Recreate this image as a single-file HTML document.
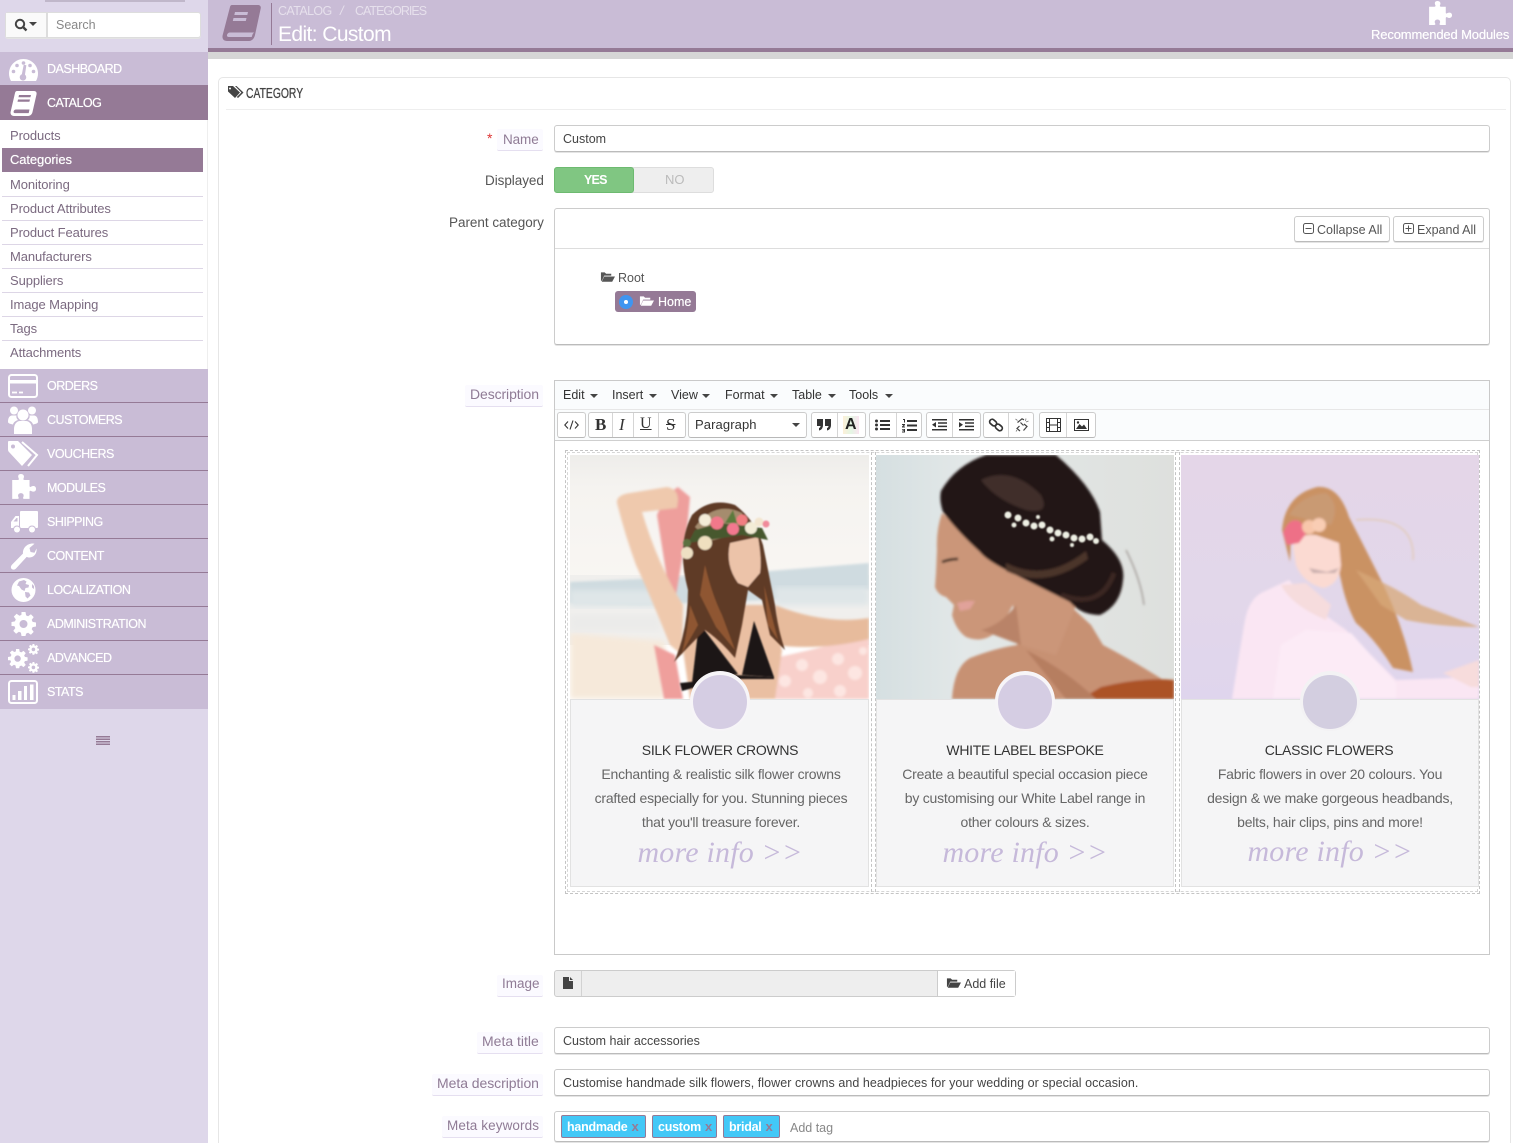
<!DOCTYPE html>
<html><head><meta charset="utf-8"><title>Edit: Custom</title>
<style>
html,body{margin:0;padding:0;background:#fff}
#p{position:relative;width:1513px;height:1143px;overflow:hidden;background:#fff;font-family:"Liberation Sans",sans-serif;font-size:12.5px;color:#555}
.a,.t{position:absolute}
.t{white-space:nowrap;line-height:20px}
svg{position:absolute;overflow:visible}
.m{left:0;width:208px;background:#c9bcd6;height:33px;border-bottom:1px solid #957a96}
.mt{left:47px;color:#fff;font-size:12.5px;letter-spacing:-.5px;text-shadow:0 0 .5px #fff}
.s{left:10px;color:#7b6a80;font-size:13px;letter-spacing:-.1px}
.l{left:2px;width:201px;height:1px;background:#ddd6e6}
.inp{background:#fff;border:1px solid #ccc;border-bottom-color:#bbb;border-radius:3px;box-sizing:border-box;box-shadow:0 1px 0 #e4e4e4}
.lab{color:#8f7b95;font-size:13.5px;text-align:right}
.lb{background:#fbfaff;height:21px;border-bottom:1px solid #e5dff0;border-radius:2px}
.tb{background:#fff;border:1px solid #ccc;border-bottom-color:#b8b8b8;border-radius:3px;box-sizing:border-box;height:26px;top:412px}
.dv{top:413px;width:1px;height:24px;background:#d5d5d5}
.mi{top:385px;color:#333;font-size:12.5px}
.ar{width:0;height:0;border-left:4px solid transparent;border-right:4px solid transparent;border-top:4px solid #444;top:394px}
.ct{color:#333;font-size:14px;width:300px;text-align:center;letter-spacing:-.3px}
.cp{color:#666;font-size:14px;width:300px;text-align:center;letter-spacing:-.22px}
.mo{color:#c6b9da;font-family:"Liberation Serif",serif;font-style:italic;font-size:30px;letter-spacing:.2px;width:300px;text-align:center;line-height:40px}
.tg{background:#43c8f7;border:1px solid #957a96;border-radius:2px;box-sizing:border-box;height:23px;top:1115px;color:#fff;font-size:12.5px;font-weight:bold;line-height:21px;padding-left:5px;letter-spacing:-.25px;white-space:nowrap}
.tg b{color:#957a96;margin-left:4px;font-size:13px}
</style></head><body><div id="p">
<svg width="0" height="0" style="position:absolute"><defs>
<filter id="b1" x="-10%" y="-10%" width="120%" height="120%"><feGaussianBlur stdDeviation="1.3"/></filter>
<filter id="b0" x="-10%" y="-10%" width="120%" height="120%"><feGaussianBlur stdDeviation=".7"/></filter>
<filter id="b2" x="-10%" y="-10%" width="120%" height="120%"><feGaussianBlur stdDeviation="3"/></filter>
<path id="fo" d="M1 1h4l1.500 1.500H12v2H4.500L2 10H1zM4.500 5.500H16l-3 5.500H1.800z"/>
<path id="pz" d="M11 0c2.500 0 3.500 2 2.500 4-.5 1 0 1.500 1 1.500H19v5.500c0 1 .7 1.200 1.500.7 2-1.200 4.500-.5 4.500 2s-2.500 3.200-4.500 2c-.8-.5-1.500-.2-1.500.8V23h-5c-1 0-1.300-.7-.8-1.500 1-2 0-3.800-2.200-3.800s-3.200 1.800-2.200 3.800c.5.800.2 1.500-.8 1.500H3V5.500h5c1 0 1.500-.5 1-1.500C8 2 8.500 0 11 0z"/>
</defs></svg>

<!-- SIDEBAR -->
<div class="a" style="left:0;top:0;width:208px;height:1143px;background:#ded7ea"></div>
<div class="a" style="left:45px;top:0;width:140px;height:2px;background:#8a7a8e;opacity:.35"></div>
<div class="a inp" style="left:5px;top:12px;width:196px;height:26px;border-color:#ddd"></div>
<div class="a" style="left:6px;top:13px;width:40px;height:24px;background:#fafafa;border-right:2px solid #ddd"></div>
<svg style="left:14px;top:18px" width="14" height="14" viewBox="0 0 14 14"><circle cx="6" cy="6" r="4.200" fill="none" stroke="#444" stroke-width="2"/><path d="M9 9l3.500 3.500" stroke="#444" stroke-width="2.400"/></svg>
<div class="a ar" style="left:29px;top:22px"></div>
<div class="t" style="left:56px;top:15px;color:#888;font-size:12.5px">Search</div>

<div class="a" style="left:0;top:52px;width:208px;height:33px;background:#c9bcd6"></div>
<svg style="left:9px;top:58px" width="29" height="23" viewBox="0 0 29 23"><path fill="#fff" d="M14.500 1C6.500 1 0 7.500 0 15.500c0 2.700.7 5.300 2 7.500h25c1.300-2.200 2-4.800 2-7.500C29 7.500 22.500 1 14.500 1z"/><g fill="#c9bcd6"><circle cx="14.500" cy="5" r="1.800"/><circle cx="8" cy="7.500" r="1.800"/><circle cx="21" cy="7.500" r="1.800"/><circle cx="4.500" cy="13.500" r="1.800"/><circle cx="24.500" cy="13.500" r="1.800"/><path d="M16.500 7l2.500 1-3 9a3.300 3.300 0 1 1-3-1z" transform="rotate(-10 14 17)"/></g></svg>
<div class="t mt" style="top:59px">DASHBOARD</div>

<div class="a" style="left:0;top:85px;width:208px;height:35px;background:#957a96"></div>
<svg style="left:10px;top:91px" width="28" height="25" viewBox="0 0 28 25"><path fill="#fff" d="M7 0h17c2 0 3 1.500 2.500 3.500L22.500 21c-.4 2-2 4-4.500 4H4c-2.500 0-4-2-3.300-4.500L5 2C5.300.8 6 0 7 0z"/><path fill="#957a96" d="M9 4h12l-.6 2.200H8.500zM8 8.500h12l-.6 2.200H7.500zM3.600 20.500c.3-1.200 1.300-2 2.400-2h13.500l-.8 3.600H5c-1 0-1.700-.7-1.400-1.600z"/></svg>
<div class="t mt" style="top:93px">CATALOG</div>

<div class="a" style="left:0;top:120px;width:208px;height:249px;background:#fff"></div>
<div class="a" style="left:207px;top:120px;width:1px;height:249px;background:#eee"></div>
<div class="t s" style="top:126px">Products</div>
<div class="a" style="left:2px;top:148px;width:201px;height:24px;background:#957a96"></div>
<div class="t s" style="top:150px;color:#fff;text-shadow:0 0 .5px #fff">Categories</div>
<div class="t s" style="top:175px">Monitoring</div><div class="a l" style="top:196px"></div>
<div class="t s" style="top:199px">Product Attributes</div><div class="a l" style="top:220px"></div>
<div class="t s" style="top:223px">Product Features</div><div class="a l" style="top:244px"></div>
<div class="t s" style="top:247px">Manufacturers</div><div class="a l" style="top:268px"></div>
<div class="t s" style="top:271px">Suppliers</div><div class="a l" style="top:292px"></div>
<div class="t s" style="top:295px">Image Mapping</div><div class="a l" style="top:316px"></div>
<div class="t s" style="top:319px">Tags</div><div class="a l" style="top:340px"></div>
<div class="t s" style="top:343px">Attachments</div>

<div class="a m" style="top:369px"></div><div class="a m" style="top:403px"></div><div class="a m" style="top:437px"></div><div class="a m" style="top:471px"></div><div class="a m" style="top:505px"></div><div class="a m" style="top:539px"></div><div class="a m" style="top:573px"></div><div class="a m" style="top:607px"></div><div class="a m" style="top:641px"></div>
<div class="a" style="left:0;top:675px;width:208px;height:34px;background:#c9bcd6"></div>
<div class="t mt" style="top:376px">ORDERS</div>
<div class="t mt" style="top:410px">CUSTOMERS</div>
<div class="t mt" style="top:444px">VOUCHERS</div>
<div class="t mt" style="top:478px">MODULES</div>
<div class="t mt" style="top:512px">SHIPPING</div>
<div class="t mt" style="top:546px">CONTENT</div>
<div class="t mt" style="top:580px">LOCALIZATION</div>
<div class="t mt" style="top:614px">ADMINISTRATION</div>
<div class="t mt" style="top:648px">ADVANCED</div>
<div class="t mt" style="top:682px">STATS</div>
<svg style="left:8px;top:374px" width="30" height="24" viewBox="0 0 30 24"><rect x="1" y="1" width="28" height="22" rx="2.500" fill="none" stroke="#fff" stroke-width="2"/><rect x="1" y="6" width="28" height="3.500" fill="#fff"/><path d="M4 18.500h5M11 18.500h4" stroke="#fff" stroke-width="1.800"/></svg>
<svg style="left:8px;top:406px" width="30" height="28" viewBox="0 0 30 28" fill="#fff"><circle cx="15" cy="9" r="5.500"/><path d="M6 28v-5c0-5 3-8 6-8h6c3 0 6 3 6 8v5c0 0-4 0-9 0s-9 0-9 0z"/><circle cx="6" cy="4.500" r="4"/><circle cx="24" cy="4.500" r="4"/><path d="M0 16c0-4 1.500-6.500 4-6.500h4.500C8 11 8.500 12.500 10 14c-3 1-4.500 2.500-5 4.500C2 18 0 17 0 16zM30 16c0-4-1.500-6.500-4-6.500h-4.500C22 11 21.500 12.500 20 14c3 1 4.500 2.500 5 4.500 3-.5 5-1.500 5-2.500z"/></svg>
<svg style="left:8px;top:441px" width="30" height="26" viewBox="0 0 30 26"><path fill="#fff" d="M1 0h9l14 14-10 11L1 11c-1-1-1-2-1-3V1c0-.6.400-1 1-1zm4 3.500a2 2 0 1 0 0 4 2 2 0 0 0 0-4z" fill-rule="evenodd"/><path d="M14 1l15 13-9 11" fill="none" stroke="#fff" stroke-width="2"/></svg>
<svg style="left:8px;top:474px" width="29" height="26" viewBox="0 0 25 24" fill="#fff"><use href="#pz"/></svg>
<svg style="left:11px;top:511px" width="27" height="23" viewBox="0 0 27 23" fill="#fff"><rect x="9" y="0" width="18" height="17" rx="1"/><path d="M8 5H4.500L0 11v6h8zM2.500 10.500l3-3.500H6.500v3.500z" fill-rule="evenodd"/><circle cx="6" cy="18.500" r="4" fill="#c9bcd6"/><circle cx="6" cy="18.500" r="3"/><circle cx="21" cy="18.500" r="4" fill="#c9bcd6"/><circle cx="21" cy="18.500" r="3"/></svg>
<svg style="left:11px;top:543px" width="26" height="27" viewBox="0 0 26 27"><path fill="#fff" d="M25.500 5.500c.8 4.500-2.500 9-7 9-1 0-2-.2-2.800-.6L5 25.500c-1.500 1.500-3.500 1.500-4.500.3-1-1.200-.7-2.900.7-4.300L12 10.500c-.5-5 3.500-10 10-10 .5 0 1 .1 1.500.3l-5 4.200 1 4 4 .8z"/></svg>
<svg style="left:11px;top:578px" width="25" height="24" viewBox="0 0 25 24"><circle cx="12.500" cy="12" r="12" fill="#fff"/><path fill="#c9bcd6" d="M8 3.500l5-1.500 2.500 1.500-1 2.500 3.500 1-.5 2.500-3 .5-1 3-3-1.500-2.500-3.500-2-.5zM14 14l4 .5 1.500 3-3 3-2-2zM21 6l2 2v3l-2-1.500z"/></svg>
<svg style="left:11px;top:612px" width="25" height="24" viewBox="0 0 24 24"><path fill="#fff" fill-rule="evenodd" d="M10 0h4l.6 3.400 2 .8L19.400 2.300l2.800 2.800-2 2.800.9 2 3.400.6v4l-3.400.6-.9 2 2 2.800-2.800 2.800-2.800-2-2 .9L14 24h-4l-.6-3.400-2-.9-2.800 2-2.800-2.800 2-2.800-.9-2L0 14v-4l3.400-.6.900-2-2-2.800 2.800-2.800 2.800 2 2-.9zM12 8a4 4 0 1 0 0 8 4 4 0 0 0 0-8z"/></svg>
<svg style="left:8px;top:644px" width="31" height="29" viewBox="0 0 31 29"><g fill="#fff" fill-rule="evenodd"><path transform="translate(0 5) scale(.8)" d="M10 0h4l.6 3.400 2 .8L19.400 2.300l2.800 2.800-2 2.800.9 2 3.400.6v4l-3.400.6-.9 2 2 2.800-2.800 2.800-2.800-2-2 .9L14 24h-4l-.6-3.400-2-.9-2.800 2-2.800-2.800 2-2.800-.9-2L0 14v-4l3.400-.6.900-2-2-2.800 2.800-2.800 2.800 2 2-.9zM12 8a4 4 0 1 0 0 8 4 4 0 0 0 0-8z"/><path transform="translate(20 0) scale(.45)" d="M10 0h4l.6 3.400 2 .8L19.400 2.300l2.800 2.800-2 2.800.9 2 3.400.6v4l-3.400.6-.9 2 2 2.800-2.800 2.800-2.800-2-2 .9L14 24h-4l-.6-3.400-2-.9-2.800 2-2.800-2.800 2-2.800-.9-2L0 14v-4l3.400-.6.900-2-2-2.800 2.800-2.800 2.800 2 2-.9zM12 8a4 4 0 1 0 0 8 4 4 0 0 0 0-8z"/><path transform="translate(20 18) scale(.45)" d="M10 0h4l.6 3.400 2 .8L19.400 2.300l2.800 2.800-2 2.800.9 2 3.400.6v4l-3.400.6-.9 2 2 2.800-2.800 2.800-2.800-2-2 .9L14 24h-4l-.6-3.400-2-.9-2.800 2-2.800-2.800 2-2.800-.9-2L0 14v-4l3.400-.6.900-2-2-2.800 2.800-2.800 2.800 2 2-.9zM12 8a4 4 0 1 0 0 8 4 4 0 0 0 0-8z"/></g></svg>
<svg style="left:8px;top:680px" width="30" height="24" viewBox="0 0 30 24"><rect x="1" y="1" width="28" height="22" rx="2.500" fill="none" stroke="#fff" stroke-width="2"/><path fill="#fff" d="M4.500 15h3v5h-3zM10 11h3.500v9H10zM16 6h3v14h-3zM22 4.500h3.500V20H22z"/></svg>
<div class="a" style="left:96px;top:736px;width:14px;height:10px;background:repeating-linear-gradient(#957a96 0 1.500px,#ded7ea 1.500px 2.500px)"></div>

<!-- HEADER -->
<div class="a" style="left:208px;top:0;width:1305px;height:48px;background:#c9bcd6"></div>
<div class="a" style="left:208px;top:48px;width:1305px;height:4px;background:#957a96"></div>
<div class="a" style="left:208px;top:52px;width:1305px;height:7px;background:#d6d6d6"></div>
<svg style="left:222px;top:4px" width="41" height="38" viewBox="0 0 41 38"><path fill="#957a96" d="M10 1h26c2 0 3.200 1.500 2.700 3.500L33 31c-.5 2.500-2.500 6-6 6H5c-3.500 0-5.200-2.500-4.300-6L8 3c.3-1.200 1-2 2-2z"/><path fill="#c9bcd6" d="M13 8h13l-.7 3H12.300zM11.500 14h13l-.7 3H10.800zM5 31c.3-1.500 1.500-2.500 3-2.500h24l-1.300 1.500-1 3H7c-1.500 0-2.300-.7-2-2z"/></svg>
<div class="a" style="left:271px;top:3px;width:1px;height:42px;background:#957a96"></div>
<div class="t" style="left:278px;top:1px;color:#e6e0ec;font-size:12.5px;letter-spacing:-.6px">CATALOG</div>
<div class="t" style="left:340px;top:1px;color:#e6e0ec;font-size:13px;font-style:italic">/</div>
<div class="t" style="left:355px;top:1px;color:#e6e0ec;font-size:12.5px;letter-spacing:-1px">CATEGORIES</div>
<div class="t" style="left:278px;top:25px;color:#fff;font-size:21px;letter-spacing:-.6px">Edit: Custom</div>
<svg style="left:1425px;top:1px" width="28" height="25" viewBox="0 0 25 24" fill="#fff"><use href="#pz"/></svg>
<div class="t" style="left:1371px;top:25px;color:#fff;font-size:13px;letter-spacing:-.14px;text-shadow:0 0 .5px #fff">Recommended Modules</div>

<!-- PANEL -->
<div class="a" style="left:218px;top:77px;width:1293px;height:1090px;border:1px solid #e6e6e6;border-radius:5px;box-sizing:border-box"></div>
<div class="a" style="left:226px;top:109px;width:1280px;height:1px;background:#eee"></div>
<svg style="left:228px;top:86px" width="16" height="13" viewBox="0 0 16 13" fill="#444"><path d="M0 0h5l7 6.500L7 12 0 5.500zM2 1.500a1 1 0 1 0 0 2 1 1 0 0 0 0-2z" fill-rule="evenodd"/><path d="M7 0h1.500L15.500 6.500 10 12l-1.200-1 4.600-4.500z"/></svg>
<div class="t" style="left:246px;top:84px;color:#444;font-size:15px;transform:scaleX(.69);transform-origin:0 50%;text-shadow:0 0 .6px #444">CATEGORY</div>

<!-- name -->
<div class="a lb" style="left:497px;top:129px;width:46px"></div>
<div class="t" style="left:487px;top:128px;color:#d33;font-size:14px">*</div>
<div class="t lab" style="left:503px;top:130px;letter-spacing:-.1px">Name</div>
<div class="a inp" style="left:554px;top:125px;width:936px;height:27px"></div>
<div class="t" style="left:563px;top:129px;color:#444">Custom</div>
<!-- displayed -->
<div class="t" style="left:485px;top:171px;color:#555;font-size:13.5px;letter-spacing:-.05px">Displayed</div>
<div class="a" style="left:554px;top:167px;width:160px;height:26px;background:#eee;border:1px solid #ddd;border-radius:3px;box-sizing:border-box"></div>
<div class="a" style="left:554px;top:167px;width:80px;height:26px;background:#80c682;border:1px solid #6dba70;border-radius:3px;box-sizing:border-box"></div>
<div class="t" style="left:584px;top:170px;color:#fff;font-size:12.5px;font-weight:bold;letter-spacing:-.8px">YES</div>
<div class="t" style="left:665px;top:170px;color:#bbb;font-size:13px">NO</div>
<!-- parent -->
<div class="t" style="left:449px;top:213px;color:#555;font-size:13.500px;letter-spacing:-.03px">Parent category</div>
<div class="a inp" style="left:554px;top:208px;width:936px;height:137px"></div>
<div class="a" style="left:555px;top:248px;width:934px;height:1px;background:#ddd"></div>
<div class="a inp" style="left:1294px;top:216px;width:96px;height:26px"></div>
<div class="a inp" style="left:1393px;top:216px;width:91px;height:26px"></div>
<svg style="left:1303px;top:223px" width="11" height="11"><rect x=".5" y=".5" width="10" height="10" rx="2" fill="none" stroke="#555"/><path d="M2.500 5.500h6" stroke="#555"/></svg>
<svg style="left:1403px;top:223px" width="11" height="11"><rect x=".5" y=".5" width="10" height="10" rx="2" fill="none" stroke="#555"/><path d="M2.500 5.500h6M5.500 2.500v6" stroke="#555"/></svg>
<div class="t" style="left:1317px;top:220px;color:#555">Collapse All</div>
<div class="t" style="left:1417px;top:220px;color:#555">Expand All</div>
<svg style="left:600px;top:271px" width="15" height="12" viewBox="0 0 16 12" fill="#555"><use href="#fo"/></svg>
<div class="t" style="left:618px;top:268px;color:#555">Root</div>
<div class="a" style="left:615px;top:291px;width:81px;height:21px;background:#957a96;border-radius:3px"></div>
<svg style="left:619px;top:295px" width="14" height="14"><circle cx="7" cy="7" r="7" fill="#3f95f0"/><circle cx="7" cy="7" r="2" fill="#fff"/></svg>
<svg style="left:639px;top:295px" width="15" height="12" viewBox="0 0 16 12" fill="#fff"><use href="#fo"/></svg>
<div class="t" style="left:658px;top:292px;color:#fff;text-shadow:0 0 .5px #fff">Home</div>

<!-- description -->
<div class="a lb" style="left:465px;top:385px;width:78px"></div>
<div class="t lab" style="left:470px;top:384px;font-size:14px;letter-spacing:-.1px">Description</div>
<div class="a" style="left:554px;top:380px;width:936px;height:575px;border:1px solid #c9c9c9;box-sizing:border-box;background:#fff"></div>
<div class="a" style="left:555px;top:381px;width:934px;height:28px;background:#fafcfd;border-bottom:1px solid #e7e7e7"></div>
<div class="a" style="left:555px;top:410px;width:934px;height:30px;background:#fafcfd;border-bottom:1px solid #cfcfcf"></div>
<div class="t mi" style="left:563px">Edit</div><div class="a ar" style="left:590px"></div>
<div class="t mi" style="left:612px">Insert</div><div class="a ar" style="left:649px"></div>
<div class="t mi" style="left:671px">View</div><div class="a ar" style="left:702px"></div>
<div class="t mi" style="left:725px">Format</div><div class="a ar" style="left:770px"></div>
<div class="t mi" style="left:792px">Table</div><div class="a ar" style="left:828px"></div>
<div class="t mi" style="left:849px">Tools</div><div class="a ar" style="left:885px"></div>

<div class="a tb" style="left:557px;width:29px"></div>
<div class="a tb" style="left:588px;width:98px"></div><div class="a dv" style="left:612px"></div><div class="a dv" style="left:633px"></div><div class="a dv" style="left:658px"></div>
<div class="a tb" style="left:688px;width:119px"></div>
<div class="a tb" style="left:811px;width:55px"></div><div class="a dv" style="left:837px"></div>
<div class="a tb" style="left:869px;width:53px"></div><div class="a dv" style="left:896px"></div>
<div class="a tb" style="left:926px;width:55px"></div><div class="a dv" style="left:952px"></div>
<div class="a tb" style="left:983px;width:51px"></div><div class="a dv" style="left:1008px"></div>
<div class="a tb" style="left:1039px;width:57px"></div><div class="a dv" style="left:1066px"></div>
<svg style="left:564px;top:420px" width="15" height="10"><path d="M4 1.500L.8 5 4 8.500M11 1.500L14.200 5 11 8.500M9 .5L6 9.500" fill="none" stroke="#333" stroke-width="1.100"/></svg>
<div class="t" style="left:595px;top:415px;color:#333;font:bold 17px/20px 'Liberation Serif',serif">B</div>
<div class="t" style="left:619px;top:415px;color:#333;font:italic 17px/20px 'Liberation Serif',serif">I</div>
<div class="t" style="left:640px;top:414px;color:#333;font:16px/20px 'Liberation Serif',serif;text-decoration:underline">U</div>
<div class="t" style="left:666px;top:415px;color:#333;font:17px/20px 'Liberation Serif',serif;text-decoration:line-through">S</div>
<div class="t" style="left:695px;top:415px;color:#333;font-size:13px;letter-spacing:.1px">Paragraph</div>
<div class="a ar" style="left:792px;top:423px"></div>
<svg style="left:817px;top:419px" width="14" height="12" fill="#333"><path d="M0 0h6v6c0 3-1.500 5-4 5.500V9c1-.2 1.500-1 1.500-2H0zM8 0h6v6c0 3-1.500 5-4 5.500V9c1-.2 1.500-1 1.500-2H8z"/></svg>
<div class="a" style="left:843px;top:416px;width:16px;height:18px;background:linear-gradient(90deg,#fdf0d8,#e4f6e4 50%,#fae4f0)"></div>
<div class="t" style="left:845px;top:415px;color:#222;font-size:16px;font-weight:bold;">A</div>
<svg style="left:875px;top:419px" width="15" height="12" fill="#333"><path d="M5 1h10v2H5zM5 5h10v2H5zM5 9h10v2H5z"/><circle cx="1.500" cy="2" r="1.500"/><circle cx="1.500" cy="6" r="1.500"/><circle cx="1.500" cy="10" r="1.500"/></svg>
<svg style="left:902px;top:419px" width="15" height="13" fill="#333"><path d="M5 1h10v2H5zM5 5.500h10v2H5zM5 10h10v2H5zM1 0h2v3.500H2V1H1zM0 5h3v1L1.500 7.500H3V8.500H0v-1L1.500 6H0zM0 10h3v3.500H0v-1h2V12H.5v-.8H2v-.4H0z"/></svg>
<svg style="left:932px;top:419px" width="15" height="12" fill="#333"><path d="M0 0h15v1.500H0zM6 3.300h9v1.500H6zM6 6.600h9v1.500H6zM0 10h15v1.500H0zM4 3v5.500L0 5.700z"/></svg>
<svg style="left:959px;top:419px" width="15" height="12" fill="#333"><path d="M0 0h15v1.500H0zM6 3.300h9v1.500H6zM6 6.600h9v1.500H6zM0 10h15v1.500H0zM0 3v5.500l4-2.800z"/></svg>
<svg style="left:989px;top:418px" width="14" height="14"><g fill="none" stroke="#333" stroke-width="1.700" transform="rotate(40 7 7)"><rect x="-.5" y="4.500" width="7.500" height="5" rx="2.500"/><rect x="7" y="4.500" width="7.500" height="5" rx="2.500"/></g></svg>
<svg style="left:1015px;top:418px" width="14" height="14"><g fill="none" stroke="#444" stroke-width="1.200"><path d="M2.500 4.500L7 0.800l2 1M5 13l-3-2.500 2.500-2.500M9 6l3 2.500-3.500 4M5.500 4.500l3 3"/></g><path d="M.5 1l2 1.500M11 .5l-.5 2.500M13.500 3L11 4M1 13.500l1-1.500" stroke="#777" stroke-width=".8"/></svg>
<svg style="left:1046px;top:418px" width="15" height="14"><rect x=".5" y=".5" width="14" height="13" fill="none" stroke="#333"/><path d="M3.500 .5v13M11.500 .5v13M.5 4.500h3M.5 9.500h3M11.500 4.500h3M11.500 9.500h3M3.500 7h8" stroke="#333" fill="none"/></svg>
<svg style="left:1074px;top:419px" width="15" height="12"><rect x=".5" y=".5" width="14" height="11" fill="#fff" stroke="#333"/><path d="M2 10l3.500-5 2.500 2.500 2-2 3 4.500z" fill="#333"/><circle cx="4" cy="3.500" r="1.200" fill="#333"/></svg>

<!-- editor content: dashes -->
<div class="a" style="left:565px;top:450px;width:915px;height:444px;border:1px dashed #c4c4c4;box-sizing:border-box"></div>
<div class="a" style="left:567px;top:452px;width:911px;height:440px;border:1px dashed #d6d6d6;box-sizing:border-box"></div>
<div class="a" style="left:871px;top:452px;width:3px;height:440px;border-left:1px dashed #c4c4c4;border-right:1px dashed #c4c4c4"></div>
<div class="a" style="left:1175px;top:452px;width:3px;height:440px;border-left:1px dashed #c4c4c4;border-right:1px dashed #c4c4c4"></div>

<!-- card bodies -->
<div class="a" style="left:570px;top:699px;width:299px;height:188px;background:#f5f5f6;border:1px solid #e2e2e2;box-sizing:border-box"></div>
<div class="a" style="left:876px;top:699px;width:298px;height:188px;background:#f5f5f6;border:1px solid #e2e2e2;box-sizing:border-box"></div>
<div class="a" style="left:1181px;top:699px;width:298px;height:188px;background:#f5f5f6;border:1px solid #e2e2e2;box-sizing:border-box"></div>

<!-- PHOTO 1 -->
<svg style="left:570px;top:455px;overflow:hidden" width="299" height="244" viewBox="0 0 299 244">
<defs><linearGradient id="sk1" x1="0" y1="0" x2="0" y2="1"><stop offset="0" stop-color="#eeedea"/><stop offset=".25" stop-color="#f5f3f0"/><stop offset="1" stop-color="#f9f6f3"/></linearGradient></defs>
<rect width="299" height="130" fill="url(#sk1)"/>
<rect y="120" width="299" height="70" fill="#f0efed"/>
<path d="M0 127L70 124L200 116L299 108V135L200 145L70 150L0 148z" fill="#cfdbe0" filter="url(#b1)"/>
<path d="M0 135H95V152H0zM205 132H299V150H205z" fill="#dfe6e8" filter="url(#b2)"/>
<path d="M0 178L95 186V244H0z" fill="#f6e9da" filter="url(#b2)"/>
<path d="M0 160H90V176H0z" fill="#ebebea" filter="url(#b2)"/>
<g filter="url(#b1)">
<path d="M87 60L96 40L108 32L120 42L117 75L106 140L98 130z" fill="#ee9f9c"/>
<path d="M84 190L105 200L113 244H94z" fill="#ef9f9c"/>
<path d="M196 205L240 195L299 180V244H200z" fill="#f8d0cb"/>
<g fill="#fde6e2"><circle cx="215" cy="226" r="6"/><circle cx="232" cy="210" r="6"/><circle cx="250" cy="222" r="7"/><circle cx="268" cy="204" r="6"/><circle cx="285" cy="218" r="7"/><circle cx="270" cy="236" r="6"/><circle cx="293" cy="196" r="4"/><circle cx="238" cy="238" r="5"/></g>
<path d="M205 150Q255 170 299 163V184Q250 196 205 190z" fill="#e7bb9c"/>
<path d="M47 48Q46 40 60 38L97 32Q108 34 108 45L107 53L72 57Q88 110 113 150L112 200L100 190Q80 140 66 110Q55 80 47 48z" fill="#efc9ad"/>
<path d="M113 195L125 150L200 150L212 195L205 244H120z" fill="#eabfa2"/>
</g>
<g filter="url(#b0)">
<path d="M129 168L168 219L122 228zM172 220L184 166L204 222z" fill="#1a1513"/>
<path d="M110 228L130 226L165 220L204 222V224L165 224L130 231L112 236z" fill="#1a1513"/>
<path d="M122 60Q140 42 165 50Q185 65 193 90Q200 125 205 150Q208 175 215 195L200 180L192 145L178 135L172 170L165 203Q150 185 135 175Q120 190 104 207Q118 175 118 135Q106 90 122 60z" fill="#5f3a27"/>
<path d="M125 72Q145 45 172 58L178 76L140 86z" fill="#a58c6e"/>
<path d="M160 88L188 82Q192 105 190 118L178 132L168 128Q155 110 160 88z" fill="#ecc3a9"/>
<path d="M135 110Q142 140 152 160L165 195L146 172L130 140zM194 130Q200 155 208 185L198 170zM120 150Q118 175 112 198L128 170z" fill="#8f5632"/>
<path d="M118 88L145 84L172 80L198 85L192 73L150 68L125 75z" fill="#46592f"/>
<circle cx="135" cy="88" r="7" fill="#efdfbf"/><circle cx="117" cy="88" r="4" fill="#5b7040"/><circle cx="117" cy="98" r="6" fill="#eee0c3"/>
<circle cx="135" cy="65" r="6" fill="#f4ecd8"/><circle cx="147" cy="68" r="6.500" fill="#f1788a"/><circle cx="163" cy="74" r="6" fill="#f3788f"/><circle cx="172" cy="65" r="5.500" fill="#f17d80"/><circle cx="181" cy="73" r="6" fill="#f3ecd6"/><circle cx="189" cy="67" r="4.500" fill="#f3e6d0"/><circle cx="196" cy="69" r="3.500" fill="#f08a9a"/><path d="M155 68l8-13 4 13z" fill="#5c7a3c"/>
</g></svg>

<!-- PHOTO 2 -->
<svg style="left:876px;top:455px;overflow:hidden" width="298" height="244" viewBox="0 0 298 244">
<defs><linearGradient id="sk2" x1="0" y1="0" x2="1" y2="0"><stop offset="0" stop-color="#d5dfe1"/><stop offset=".3" stop-color="#e3e8e8"/><stop offset="1" stop-color="#dee0dd"/></linearGradient></defs>
<rect width="298" height="244" fill="url(#sk2)"/>
<g filter="url(#b1)">
<path d="M76 244Q78 212 94 203Q120 193 141 190L150 170L190 147L215 170L227 190Q265 210 298 232V244z" fill="#c79173"/>
<path d="M225 232Q265 222 298 225V244H205z" fill="#ac5326"/>
<path d="M150 195Q190 215 220 244H190Q170 220 150 195z" fill="#b67e60"/>
<path d="M66 58Q60 75 61 95L60 118L59 132Q62 140 70 142L78 150L76 160Q80 175 90 182Q110 190 125 172L137 150L145 190L180 200L200 150L134 105L104 90z" fill="#cb9679"/>
<path d="M105 175Q125 170 140 150L145 190z" fill="#b98368"/>
<path d="M65 36Q80 10 110 0H180Q215 30 224 57L226 85Q250 105 247 125Q245 150 224 160Q205 160 194 147L174 137Q150 125 134 117Q110 105 104 97Q80 75 67 57Q63 45 65 36z" fill="#241514"/>
<path d="M105 25Q135 10 165 40Q175 60 150 55Q120 45 105 25z" fill="#3f2f2b"/>
<path d="M130 108Q170 128 210 96L212 104Q170 135 130 116z" fill="#4c352c"/>
<path d="M185 140Q225 155 238 118" stroke="#3a2823" stroke-width="5" fill="none"/>
<path d="M66 107Q74 104 82 104" stroke="#1c1210" stroke-width="2.500" fill="none"/>
<path d="M250 95Q265 125 268 150" stroke="#8a807b" stroke-width="1" fill="none"/>
<path d="M81 148l10-2 8 0-5 8-10 2z" fill="#e1a29a"/>
</g>
<g fill="#eef0e4" filter="url(#b0)"><circle cx="132" cy="60" r="3.500"/><circle cx="142" cy="63" r="3.500"/><circle cx="150" cy="68" r="3.500"/><circle cx="158" cy="71" r="3.500"/><circle cx="166" cy="70" r="3.500"/><circle cx="174" cy="75" r="3.500"/><circle cx="182" cy="78" r="3.500"/><circle cx="190" cy="80" r="3.500"/><circle cx="198" cy="83" r="3.500"/><circle cx="206" cy="84" r="3.500"/><circle cx="214" cy="82" r="3.500"/><circle cx="220" cy="86" r="3"/><circle cx="138" cy="70" r="2.500"/><circle cx="162" cy="62" r="2"/><circle cx="196" cy="90" r="2"/><circle cx="176" cy="84" r="2.500"/></g>
</svg>

<!-- PHOTO 3 -->
<svg style="left:1181px;top:455px;overflow:hidden" width="298" height="244" viewBox="0 0 298 244">
<defs><linearGradient id="sk3" x1="0" y1="0" x2="0" y2="1"><stop offset="0" stop-color="#e4d6e8"/><stop offset=".6" stop-color="#e2d7ea"/><stop offset="1" stop-color="#dfd5ed"/></linearGradient></defs>
<rect width="298" height="244" fill="url(#sk3)"/>
<g filter="url(#b1)">
<path d="M51 244Q58 200 64 165Q68 145 80 138L108 125L130 150L165 175L215 225L298 222V244z" fill="#fae6f3"/>
<path d="M92 244L100 190L125 175L170 178L215 228V244z" fill="#fcebf6"/>
<path d="M298 205L262 218L290 232L298 232z" fill="#f7dcdc"/>
<path d="M101 75Q104 40 136 32Q158 30 168 62Q180 85 200 125Q222 170 232 217L212 213Q195 185 175 168Q165 150 160 125L150 85L110 80L109 107Z" fill="#ca9264"/>
<path d="M108 60Q120 40 145 38Q160 50 150 70z" fill="#c99a73"/>
<path d="M175 115Q220 135 240 150Q280 165 298 172Q260 172 225 165L200 150z" fill="#d7a878" opacity=".75"/>
<path d="M175 65Q235 60 232 105" stroke="#e2cab8" stroke-width="1.500" fill="none"/>
<path d="M112 92Q115 78 135 80L158 88L160 110Q158 130 142 133Q122 128 115 110z" fill="#fbdad2"/>
<path d="M102 78Q108 62 118 66L128 75L118 88L106 90z" fill="#ee7087"/>
<circle cx="128" cy="72" r="7" fill="#f8c7ab"/><circle cx="138" cy="70" r="7" fill="#f9cdb4"/>
<path d="M128 113l18 4 12-4-4 5-22 0z" fill="#b39b9d" opacity=".7"/>
<path d="M100 130L125 128L150 150L145 165Q110 150 100 130z" fill="#f6dcdd"/>
</g></svg>

<!-- circles -->
<div class="a" style="left:690px;top:671px;width:60px;height:60px;border-radius:50%;background:#f7f5f8"></div>
<div class="a" style="left:693px;top:675px;width:54px;height:54px;border-radius:50%;background:#d5cde3"></div>
<div class="a" style="left:995px;top:671px;width:60px;height:60px;border-radius:50%;background:#f7f5f8"></div>
<div class="a" style="left:998px;top:675px;width:54px;height:54px;border-radius:50%;background:#d5cde3"></div>
<div class="a" style="left:1300px;top:671px;width:60px;height:60px;border-radius:50%;background:#f3f2f4"></div>
<div class="a" style="left:1303px;top:675px;width:54px;height:54px;border-radius:50%;background:#d3cee0"></div>

<!-- card text -->
<div class="t ct" style="left:570px;top:740px">SILK FLOWER CROWNS</div>
<div class="t cp" style="left:571px;top:764px">Enchanting &amp; realistic silk flower crowns</div>
<div class="t cp" style="left:571px;top:788px">crafted especially for you. Stunning pieces</div>
<div class="t cp" style="left:571px;top:812px">that you'll treasure forever.</div>
<div class="t mo" style="left:570px;top:833px">more info &gt;&gt;</div>
<div class="t ct" style="left:875px;top:740px">WHITE LABEL BESPOKE</div>
<div class="t cp" style="left:875px;top:764px">Create a beautiful special occasion piece</div>
<div class="t cp" style="left:875px;top:788px">by customising our White Label range in</div>
<div class="t cp" style="left:875px;top:812px">other colours &amp; sizes.</div>
<div class="t mo" style="left:875px;top:833px">more info &gt;&gt;</div>
<div class="t ct" style="left:1179px;top:740px">CLASSIC FLOWERS</div>
<div class="t cp" style="left:1180px;top:764px">Fabric flowers in over 20 colours. You</div>
<div class="t cp" style="left:1180px;top:788px">design &amp; we make gorgeous headbands,</div>
<div class="t cp" style="left:1180px;top:812px">belts, hair clips, pins and more!</div>
<div class="t mo" style="left:1180px;top:832px">more info &gt;&gt;</div>

<!-- image -->
<div class="a lb" style="left:497px;top:975px;width:46px"></div>
<div class="t lab" style="left:502px;top:974px">Image</div>
<div class="a" style="left:554px;top:970px;width:462px;height:27px;background:#eee;border:1px solid #ccc;border-radius:3px;box-sizing:border-box"></div>
<div class="a" style="left:581px;top:971px;width:1px;height:25px;background:#d2d2d2"></div>
<div class="a" style="left:937px;top:971px;width:78px;height:25px;background:#fff;border-left:1px solid #ccc;box-sizing:border-box"></div>
<svg style="left:563px;top:977px" width="10" height="12" fill="#444"><path d="M0 0h6v4h4v8H0zM7 0l3 3H7z"/></svg>
<svg style="left:946px;top:977px" width="15" height="12" viewBox="0 0 16 12" fill="#444"><use href="#fo"/></svg>
<div class="t" style="left:964px;top:974px;color:#444">Add file</div>
<!-- meta -->
<div class="a lb" style="left:477px;top:1032px;width:66px"></div>
<div class="t lab" style="left:482px;top:1031px;font-size:14px;letter-spacing:0">Meta title</div>
<div class="a inp" style="left:554px;top:1027px;width:936px;height:27px"></div>
<div class="t" style="left:563px;top:1031px;color:#444">Custom hair accessories</div>
<div class="a lb" style="left:432px;top:1074px;width:111px"></div>
<div class="t lab" style="left:437px;top:1073px;font-size:14px;letter-spacing:-.05px">Meta description</div>
<div class="a inp" style="left:554px;top:1069px;width:936px;height:27px"></div>
<div class="t" style="left:563px;top:1073px;color:#444;letter-spacing:.05px">Customise handmade silk flowers, flower crowns and headpieces for your wedding or special occasion.</div>
<div class="a lb" style="left:442px;top:1116px;width:101px"></div>
<div class="t lab" style="left:447px;top:1116px;letter-spacing:.1px">Meta keywords</div>
<div class="a inp" style="left:554px;top:1111px;width:936px;height:31px"></div>
<div class="a tg" style="left:561px;width:85px">handmade<b>x</b></div>
<div class="a tg" style="left:652px;width:65px">custom<b>x</b></div>
<div class="a tg" style="left:723px;width:57px">bridal<b>x</b></div>
<div class="t" style="left:790px;top:1118px;color:#888">Add tag</div>
</div></body></html>
